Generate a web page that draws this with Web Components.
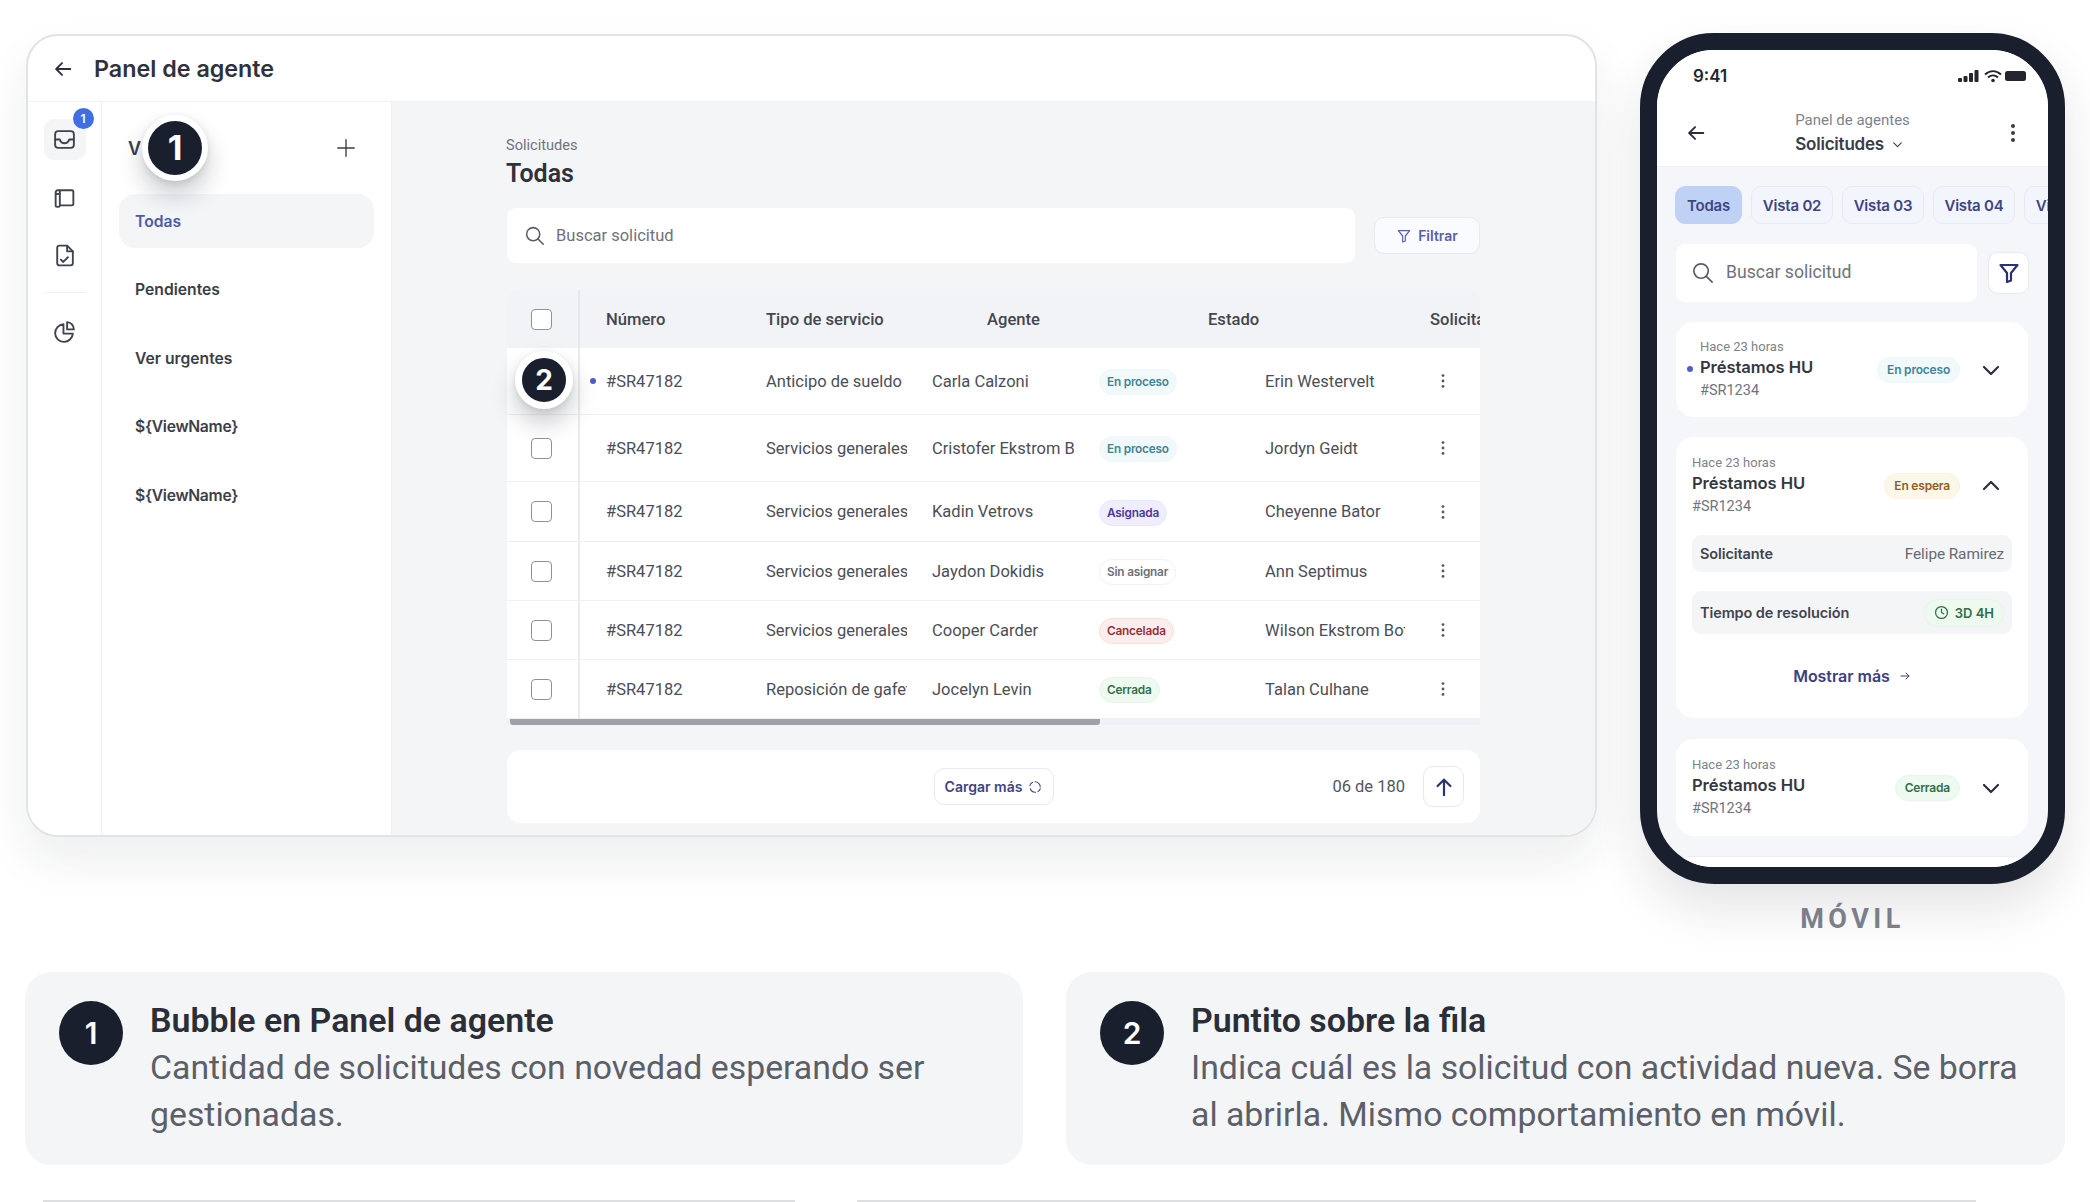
<!DOCTYPE html>
<html lang="es"><head><meta charset="utf-8"><title>Panel de agente</title>
<style>html,body{margin:0;background:#fff}body{width:2090px;height:1202px;overflow:hidden;font-family:Roboto,sans-serif}</style>
<script>
const ICONS={
 back:'<path d="M20 12H5M11 5.5 4.5 12l6.5 6.5"/>',
 inbox:'<rect x="3" y="4" width="18" height="16" rx="3"/><path d="M3 12h4.500c.6 2.300 2.400 3.600 4.500 3.600s3.900-1.300 4.500-3.600H21"/>',
 book:'<rect x="7.500" y="5" width="13" height="14.500" rx="1.500"/><path d="M7.500 5H5.500A2 2 0 0 0 3.500 7v12.500a1.500 1.500 0 0 0 1.500 1.500h1c.8 0 1.500-.7 1.500-1.500M3.500 7A1.500 1.500 0 0 0 5.500 8.500h2"/>',
 doc:'<path d="M7 2.500h7.500L20 8v11.500a2 2 0 0 1-2 2H7a2 2 0 0 1-2-2v-15a2 2 0 0 1 2-2z"/><path d="M14.500 2.500V8H20M8.500 16l2.300 2.200 4.500-4.500"/>',
 pie:'<path d="M11 5a8.500 8.500 0 1 0 9 9h-9z"/><path d="M14.500 3a7 7 0 0 1 6.500 7h-6.500z"/>',
 plus:'<path d="M12 3v18M3 12h18"/>',
 search:'<circle cx="10.500" cy="10.500" r="7.500"/><path d="m16 16 6 6"/>',
 filter:'<path d="M3.500 4h17l-6.500 8v7.500l-4 1.500v-9z"/>',
 dots:'<g fill="currentColor" stroke="none"><circle cx="12" cy="5" r="2"/><circle cx="12" cy="12" r="2"/><circle cx="12" cy="19" r="2"/></g>',
 dots2:'<g fill="currentColor" stroke="none"><circle cx="12" cy="5.500" r="1.700"/><circle cx="12" cy="12" r="1.700"/><circle cx="12" cy="18.500" r="1.700"/></g>',
 up:'<path d="M12 21V4M5 11l7-7 7 7"/>',
 down:'<path d="m5 9 7 7 7-7"/>',
 upc:'<path d="m5 15 7-7 7 7"/>',
 right:'<path d="M4 12h16M14 6l6 6-6 6"/>',
 spin:'<path d="M12 3a9 9 0 0 1 9 9M21 15a9 9 0 0 1-4 5M13 21a9 9 0 0 1-9-6M3 10a9 9 0 0 1 5-6" />',
 clock:'<circle cx="12" cy="12" r="9.500"/><path d="M12 6.500V12l3.500 2"/>'
};
function def(name,css,html){
 customElements.define(name,class extends HTMLElement{
  connectedCallback(){
   if(this.shadowRoot)return;
   const a=n=>this.getAttribute(n)||'';
   const r=this.attachShadow({mode:'open'});
   r.innerHTML='<style>'+css+'</style>'+(typeof html==='function'?html(a,this):html);
  }
 });
}
def('x-icon',':host{display:inline-flex;flex:none;line-height:0}svg{display:block;fill:none;stroke:currentColor;stroke-linecap:round;stroke-linejoin:round}',
 a=>`<svg width="${a('size')||20}" height="${a('size')||20}" viewBox="0 0 24 24" stroke-width="${a('sw')||2}">${ICONS[a('name')]}</svg>`);
def('x-bubble',`:host{position:absolute;display:flex;align-items:center;justify-content:center;box-sizing:border-box;border-radius:50%;background:#1a1f2e;border-style:solid;border-color:#fff;color:#fff;font:700 var(--fs,36px)/1 Inter,sans-serif;box-shadow:0 14px 24px rgba(20,24,40,.22),0 2px 6px rgba(20,24,40,.1)}`,'<slot></slot>');
def('x-rail-item',`:host{display:flex;width:42px;height:41px;align-items:center;justify-content:center;border-radius:10px;color:#3f434c;position:relative}
 :host([active]){background:#f4f5f7}
 .n{position:absolute;left:29px;top:-11px;width:21px;height:21px;border-radius:50%;background:#3f6fe3;color:#fff;font:600 12px/21px Inter,sans-serif;text-align:center}`,
 a=>`<x-icon name="${a('icon')}" size="25" sw="1.800"></x-icon>${a('count')?`<span class="n">${a('count')}</span>`:''}`);
def('x-rail',`:host{display:flex;flex-direction:column;align-items:center;width:74px;flex:none;box-sizing:border-box;padding-top:17px;background:#fff;border-right:1px solid #eff0f2}
 hr{border:0;height:1px;width:42px;background:#eff0f2;margin:16px 0 18px}`,
 `<x-rail-item icon="inbox" active count="1"></x-rail-item><x-rail-item icon="book" style="margin-top:17px"></x-rail-item><x-rail-item icon="doc" style="margin-top:17px"></x-rail-item><hr><x-rail-item icon="pie"></x-rail-item>`);
def('x-nav-item',`:host{display:flex;align-items:center;height:54px;padding-left:16px;border-radius:16px;font:600 15.700px Inter,sans-serif;color:#3b3e47}
 :host([active]){background:#f4f5f7;color:#4f5aa8}
 .v{letter-spacing:-.3px}`,a=>`<span class="${a('v')?'v':''}"><slot></slot></span>`);
def('x-sidebar',`:host{display:block;width:290px;flex:none;box-sizing:border-box;padding:0 17px 0 17px;background:#fff;border-right:1px solid #eff0f2}
 .h{display:flex;align-items:center;justify-content:space-between;height:92px;padding:0 17px 0 9px;font:600 18px Inter,sans-serif;color:#3b3e47}
 .h x-icon{margin-top:-1px}
 .l{display:flex;flex-direction:column;gap:14.500px;margin-top:0}`,
 `<div class="h"><span>V</span><x-icon name="plus" size="22" sw="1.500"></x-icon></div>
 <div class="l"><x-nav-item active>Todas</x-nav-item><x-nav-item>Pendientes</x-nav-item><x-nav-item>Ver urgentes</x-nav-item><x-nav-item v="1">\${ViewName}</x-nav-item><x-nav-item v="1">\${ViewName}</x-nav-item></div>`);
def('x-badge',`:host{display:inline-flex;align-items:center;box-sizing:border-box;height:26px;padding:0 9px;border-radius:13px;border:1px solid transparent;font:600 12px Inter,sans-serif;white-space:nowrap;letter-spacing:-.2px;gap:6px}
 :host([tone=proc]){background:#f1f9fb;border-color:#eef7f9;color:#3f8598}
 :host([tone=asig]){background:#f0edfd;border-color:#ece8fb;color:#4c36a6}
 :host([tone=none]){background:#fff;border-color:#f1f1f3;color:#6e7079}
 :host([tone=canc]){background:#fdeeee;border-color:#f8dddd;color:#9a2d3b}
 :host([tone=cerr]){background:#eef9f0;border-color:#e8f5ea;color:#2e7048}
 :host([tone=esp]){background:#fdf7e9;border-color:#fbf2df;color:#91601f}`,'<slot></slot>');
const GRID='display:grid;grid-template-columns:73px 26px 160px 166px 167px 166px 168px 1fr;align-items:center';
def('x-check',`:host{display:block;width:21px;height:21px;box-sizing:border-box;border:1.700px solid #8f929b;border-radius:4px;background:#fff}`,'');
def('x-row',`:host{${GRID};box-sizing:border-box;border-bottom:1px solid #eef0f3;background:#fff;font:400 16.500px Roboto,sans-serif;color:#4b4e57}
 .c{display:flex;justify-content:center;align-items:center;height:100%;border-right:2px solid #e9eaef;box-sizing:border-box;padding-right:2px}
 .d{display:flex;justify-content:flex-start;padding-left:10px}.d i{width:6px;height:6px;border-radius:50%;background:#4f5ccc}
 .t{white-space:nowrap;overflow:hidden}.t2{width:141px}.t3{width:142px}.t5{width:140px}
 .m{color:#55585f}.bd{padding-top:2px;line-height:0}`,
 a=>`<div class="c"><x-check></x-check></div><div class="d">${a('dot')?'<i></i>':''}</div><div class="t">#SR47182</div><div class="t t2">${a('type')}</div><div class="t t3">${a('agent')}</div><div class="bd"><x-badge tone="${a('tone')}" style="padding:0 7px;font-size:11.800px">${a('status')}</x-badge></div><div class="t t5">${a('req')}</div><x-icon class="m" name="dots2" size="20"></x-icon>`);
def('x-table',`:host{display:block;position:relative;margin-top:27px;border-radius:14px 14px 0 0;overflow:hidden;background:#f2f3f6}
 .hd{display:grid;grid-template-columns:73px 26px 160px 221px 221px 222px 50px;align-items:center;height:58px;box-sizing:border-box;padding-bottom:2px;font:500 16.600px Roboto,sans-serif;color:#43464f;white-space:nowrap;background:#f2f3f6}
 .hd>div{overflow:hidden}.c{display:flex;justify-content:center;align-items:center;height:60px;margin-bottom:-2px;border-right:2px solid #e6e7ec;box-sizing:border-box;padding:0 2px 2px 0}
 .sb{height:6px;background:#f0f0f6;border-radius:0 0 3px 3px;display:flex;padding-left:3px}.sb i{width:590px;background:#9fa1aa;border-radius:0 0 3px 3px}`,
 `<div class="hd"><div class="c"><x-check></x-check></div><div></div><div>Número</div><div>Tipo de servicio</div><div>Agente</div><div>Estado</div><div>Solicitante</div></div>
 <slot></slot><div class="sb"><i></i></div>`);
def('x-search',`:host{display:flex;align-items:center;box-sizing:border-box;background:#fff;border-radius:9px;color:#6f727c;font:400 var(--fs,16.500px) Roboto,sans-serif}
 x-icon{color:#5b5e68}`,a=>`<x-icon name="search" size="${a('i')||21}" sw="1.800"></x-icon><span style="margin-left:${a('g')||11}px"><slot></slot></span>`);
def('x-btn',`:host{display:inline-flex;align-items:center;justify-content:center;box-sizing:border-box;background:#fff;border:1.500px solid #e8e9f1;border-radius:10px;font:600 14px Inter,sans-serif;color:#3f4482;gap:6px;flex:none}`,'<slot></slot>');
def('x-main',`:host{display:flex;flex-direction:column;flex:1;min-width:0;box-sizing:border-box;padding:35px 115px 0 115px;background:#f4f5f7}
 .s{font:400 14.600px/17px Roboto,sans-serif;color:#70737c;margin-left:-1px}.h{font:600 25px/32px Roboto,sans-serif;color:#2f323a;margin:4px 0 18px -1px}
 .top{display:flex;align-items:center;gap:19px}
 .f{display:grid;grid-template-columns:1fr auto 1fr;align-items:center;height:73px;background:#fff;border-radius:14px;margin-top:25px}
 .r{display:flex;justify-content:flex-end;align-items:center;gap:18px;padding-right:16px;font:400 16.500px Roboto,sans-serif;color:#53565f}`,
 `<div class="s">Solicitudes</div><div class="h">Todas</div>
 <div class="top"><x-search style="width:848px;height:55px;padding-left:17px">Buscar solicitud</x-search>
 <x-btn style="width:106px;height:37px;background:#fafbfe;color:#5a60a8"><x-icon name="filter" size="16" sw="1.800"></x-icon>Filtrar</x-btn></div>
 <x-table>
  <x-row style="height:67px" dot="1" type="Anticipo de sueldo" agent="Carla Calzoni" tone="proc" status="En proceso" req="Erin Westervelt"></x-row>
  <x-row style="height:67px" type="Servicios generales" agent="Cristofer Ekstrom Bothman" tone="proc" status="En proceso" req="Jordyn Geidt"></x-row>
  <x-row style="height:60px" type="Servicios generales" agent="Kadin Vetrovs" tone="asig" status="Asignada" req="Cheyenne Bator"></x-row>
  <x-row style="height:59px" type="Servicios generales" agent="Jaydon Dokidis" tone="none" status="Sin asignar" req="Ann Septimus"></x-row>
  <x-row style="height:59px" type="Servicios generales" agent="Cooper Carder" tone="canc" status="Cancelada" req="Wilson Ekstrom Bothman"></x-row>
  <x-row style="height:59px" type="Reposición de gafete" agent="Jocelyn Levin" tone="cerr" status="Cerrada" req="Talan Culhane"></x-row>
 </x-table>
 <div class="f"><div></div><x-btn style="width:120px;height:37px">Cargar más<x-icon name="spin" size="14" sw="1.800"></x-icon></x-btn>
 <div class="r">06 de 180<x-btn style="width:41px;height:41px;color:#2c3270"><x-icon name="up" size="22" sw="2.400"></x-icon></x-btn></div></div>`);
def('x-panel',`:host{display:flex;flex-direction:column;position:relative;width:1571px;height:803px;margin-top:1px;box-sizing:border-box;border:2px solid #e2e3e6;border-radius:32px;background:#fff;box-shadow:0 24px 48px rgba(30,34,50,.08)}
 .clip{display:flex;flex-direction:column;height:100%;border-radius:30px;overflow:hidden}
 .t{display:flex;align-items:center;height:65px;flex:none;padding-left:24px;gap:20px;font:600 23.300px Inter,sans-serif;color:#2f323a;border-bottom:1px solid #f1f2f4;box-sizing:content-box}
 .b{display:flex;flex:1;min-height:0}`,
 `<div class="clip"><div class="t"><x-icon name="back" size="22"></x-icon>Panel de agente</div><div class="b"><x-rail></x-rail><x-sidebar></x-sidebar><x-main></x-main></div></div>
 <x-bubble style="left:114px;top:79px;width:66px;height:66px;border-width:6px;--fs:34px">1</x-bubble>
 <x-bubble style="left:487px;top:315px;width:58px;height:58px;border-width:7px;--fs:28px">2</x-bubble>`);
def('x-mcard',`:host{display:block;position:relative;background:#fff;border-radius:18px;box-sizing:border-box;padding:18px 16px 0 16px}
 .h{display:flex;align-items:center}.x{flex:1}
 .a{font:400 13px/16px Roboto,sans-serif;color:#80838c}
 .b{font:600 16.600px/22px Inter,sans-serif;color:#34373f;margin-top:1px;letter-spacing:-.1px}
 .c{font:400 14.500px/20px Roboto,sans-serif;color:#70737c;margin-top:3px}
 x-badge{margin-top:-1px}x-icon{margin:-1px 9px 0 19px;color:#2c2f38}
 i{position:absolute;left:11px;top:44px;width:6px;height:6px;border-radius:50%;background:#4f5ccc}`,
 a=>`${a('dot')?'<i></i>':''}<div class="h"><div class="x"><div class="a">Hace 23 horas</div><div class="b">Préstamos HU</div><div class="c">#SR1234</div></div><x-badge tone="${a('tone')}">${a('status')}</x-badge><x-icon name="${a('chev')||'down'}" size="24" sw="2.200"></x-icon></div><slot></slot>`);
def('x-kv',`:host{display:flex;align-items:center;justify-content:space-between;padding:0 8px;background:#f4f5f7;border-radius:9px;margin-top:19px;font:600 14.500px Inter,sans-serif;color:#41444d;letter-spacing:-.1px}
 .v{font:400 15.400px Roboto,sans-serif;color:#686b74;display:flex}`,'<slot></slot><span class="v"><slot name="v"></slot></span>');
def('x-tab',`:host{display:flex;align-items:center;justify-content:center;flex:none;box-sizing:border-box;width:82px;height:38px;border-radius:10px;border:1.500px solid #e7e9f4;background:#f3f5fd;font:600 15px Inter,sans-serif;color:#3f4482;letter-spacing:-.2px}
 :host([active]){width:67px;background:#bfd2f6;border-color:#bfd2f6}`,'<slot></slot>');
def('x-phone',`:host{display:block;width:425px;height:851px;box-sizing:border-box;border:17px solid #1a1f2e;border-radius:74px;background:#f5f6f9;box-shadow:0 24px 50px rgba(30,34,50,.12)}
 .scr{height:100%;border-radius:57px;overflow:hidden;display:flex;flex-direction:column}
 .st{display:flex;align-items:center;justify-content:space-between;height:50px;box-sizing:border-box;padding:2px 18px 0 36px;background:#fff;font:600 17px Inter,sans-serif;color:#23262e;flex:none}
 .nav{display:grid;grid-template-columns:1fr auto 1fr;align-items:center;height:67px;padding:0 28px;background:#fff;border-bottom:1px solid #ebedf0;flex:none;box-sizing:border-box;color:#2c2f38}
 .nav .mid{text-align:center}.p{font:400 15px/20px Roboto,sans-serif;color:#80838c}
 .q{font:600 17px/24px Inter,sans-serif;color:#3a3d46;display:flex;align-items:center;gap:7px;letter-spacing:-.2px;margin-top:2px}
 .tabs{display:flex;gap:9px;padding:19px 0 0 18px;overflow:hidden;flex:none}
 .sr{display:flex;align-items:center;gap:11px;padding:20px 0 0 19px;flex:none}
 .cards{display:flex;flex-direction:column;gap:20px;padding:20px 20px 0 19px}
 .next{height:40px;background:#fff;border-top:1px solid #eceef1;border-radius:14px;flex:none}
 .sm{margin:30px 0 0;text-align:center;font:600 16px/24px Inter,sans-serif;color:#3d4080;display:flex;justify-content:center;align-items:center;gap:8px;letter-spacing:-.05px}`,
 `<div class="scr"><div class="st"><span>9:41</span><svg width="72" height="14" viewBox="0 0 72 14"><g fill="#23262e"><rect x="0" y="9" width="4" height="4" rx="1"/><rect x="5.500" y="7" width="4" height="6" rx="1"/><rect x="11" y="4" width="4" height="9" rx="1"/><rect x="16.500" y="1" width="4" height="12" rx="1"/><rect x="47" y="2" width="21" height="10" rx="2.500"/></g><path d="M27 5.500c5-4.500 11-4.500 16 0M30 8.500c3-2.600 7-2.600 10 0" fill="none" stroke="#23262e" stroke-width="2"/><circle cx="35" cy="11.500" r="1.800" fill="#23262e"/></svg></div>
 <div class="nav"><x-icon name="back" size="22"></x-icon><div class="mid"><div class="p">Panel de agentes</div><div class="q">Solicitudes<x-icon name="down" size="13"></x-icon></div></div><x-icon name="dots" size="24" style="justify-self:end;color:#3a3d46;margin-right:-5px"></x-icon></div>
 <div class="tabs"><x-tab active>Todas</x-tab><x-tab>Vista 02</x-tab><x-tab>Vista 03</x-tab><x-tab>Vista 04</x-tab><x-tab>Vista 05</x-tab></div>
 <div class="sr"><x-search style="width:301px;height:58px;padding:0 0 2px 15px;--fs:17.600px" i="23" g="12">Buscar solicitud</x-search><x-btn style="width:41px;height:42px;color:#2c3270"><x-icon name="filter" size="24" sw="2.200"></x-icon></x-btn></div>
 <div class="cards">
  <x-mcard dot="1" tone="proc" status="En proceso" style="height:95px;padding-top:17px;padding-left:24px"></x-mcard>
  <x-mcard tone="esp" status="En espera" chev="upc" style="height:281px">
   <x-kv style="height:37px;margin-top:18px"><span>Solicitante</span><span slot="v">Felipe Ramirez</span></x-kv>
   <x-kv style="height:43px"><span>Tiempo de resolución</span><span slot="v"><x-badge tone="cerr" style="height:28px;font-size:13px;letter-spacing:0;padding:0 9px"><x-icon name="clock" size="15" sw="2" style="color:#2e7048"></x-icon>3D 4H</x-badge></span></x-kv>
   <div class="sm">Mostrar más<x-icon name="right" size="12" sw="2" style="margin-left:1px"></x-icon></div>
  </x-mcard>
  <x-mcard tone="cerr" status="Cerrada" style="height:97px;margin-top:1px"></x-mcard>
  <div class="next"></div>
 </div></div>`);
def('x-phone-col',`:host{display:flex;flex-direction:column;align-items:center;width:425px;flex:none}
 .m{margin-top:19px;font:700 27px/32px Roboto,sans-serif;letter-spacing:4.500px;color:#7b7e8b}`,`<x-phone></x-phone><div class="m">MÓVIL</div>`);
def('x-note',`:host{display:flex;box-sizing:border-box;height:193px;padding:29px 34px 0 34px;background:#f4f5f7;border-radius:26px;gap:27px}
 .n{flex:none;width:64px;height:64px;border-radius:50%;background:#1a1f2e;color:#fff;display:flex;align-items:center;justify-content:center;font:600 30px Inter,sans-serif}
 .t{font:600 33.900px/40px Roboto,sans-serif;color:#2b2e36}.b{font:400 33.800px/47px Roboto,sans-serif;color:#5c5f68;margin-top:3px}`,
 a=>`<div class="n">${a('n')}</div><div><div class="t">${a('title')}</div><div class="b"><slot></slot></div></div>`);
def('x-page',`:host{display:block;width:2090px;height:1202px;overflow:hidden}
 .top{display:flex;gap:43px;padding:33px 0 0 26px;height:972px;box-sizing:border-box}
 .notes{display:grid;grid-template-columns:998px 999px;gap:43px;padding-left:25px}
 .strip{display:flex;margin-top:35px;padding-left:43px;gap:62px}.strip i{height:2px;background:#dedfe1}`,
 `<div class="top"><x-panel></x-panel><x-phone-col></x-phone-col></div>
 <div class="notes"><x-note n="1" title="Bubble en Panel de agente">Cantidad de solicitudes con novedad esperando ser gestionadas.</x-note>
 <x-note n="2" title="Puntito sobre la fila">Indica cuál es la solicitud con actividad nueva. Se borra al abrirla. Mismo comportamiento en móvil.</x-note></div>
 <div class="strip"><i style="width:752px"></i><i style="width:1119px"></i></div>`);
</script></head><body><x-page></x-page></body></html>
